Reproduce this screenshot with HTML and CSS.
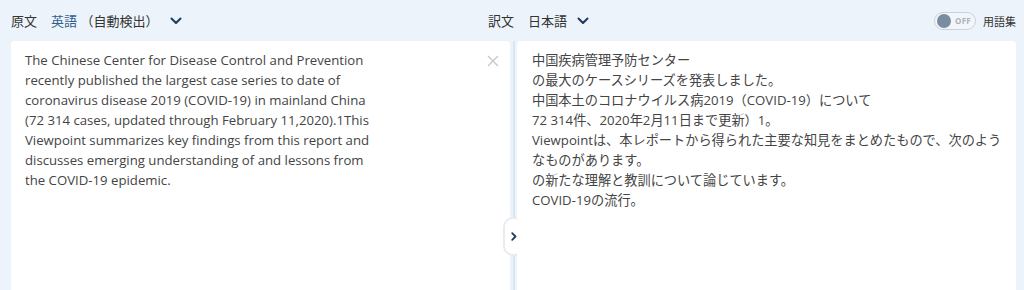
FILE: index.html
```html
<!DOCTYPE html>
<html>
<head>
    <title>翻訳</title>
    <link rel="stylesheet" href="styles.css">
</head>
<body>
    <div class="app">
        <div class="topbar">
            <div class="lang-side">
                <span class="label">原文</span>
                <span class="lang"><span class="lang-name">英語</span> （自動検出）</span>
                <svg class="chev" width="12" height="8" viewBox="0 0 12 8"><path d="M1.5 1.5 L6 6 L10.5 1.5" fill="none" stroke="#1f3a5a" stroke-width="2" stroke-linecap="round" stroke-linejoin="round"/></svg>
            </div>
            <div class="lang-side target">
                <span class="label">訳文</span>
                <span class="lang">日本語</span>
                <svg class="chev" width="12" height="8" viewBox="0 0 12 8"><path d="M1.5 1.5 L6 6 L10.5 1.5" fill="none" stroke="#1f3a5a" stroke-width="2" stroke-linecap="round" stroke-linejoin="round"/></svg>
                <div class="glossary">
                    <span class="toggle"><span class="knob"></span><span class="off">OFF</span></span>
                    <span class="gloss-label">用語集</span>
                </div>
            </div>
        </div>

        <div class="panes">
            <div class="pane source">
                <p class="text">The Chinese Center for Disease Control and Prevention<br>recently published the largest case series to date of<br>coronavirus disease 2019 (COVID-19) in mainland China<br>(72 314 cases, updated through February 11,2020).1This<br>Viewpoint summarizes key findings from this report and<br>discusses emerging understanding of and lessons from<br>the COVID-19 epidemic.</p>
                <svg class="clear" width="12" height="12" viewBox="0 0 12 12"><path d="M1 1 L11 11 M11 1 L1 11" stroke="#c4c8cc" stroke-width="1.4"/></svg>
            </div>
            <div class="divider">
                <span class="swap"><svg width="6" height="9" viewBox="0 0 6 9"><path d="M1.2 1.2 L4.5 4.5 L1.2 7.8" fill="none" stroke="#1f3a5a" stroke-width="1.8" stroke-linecap="round" stroke-linejoin="round"/></svg></span>
            </div>
            <div class="pane result">
                <p class="text">中国疾病管理予防センター<br>の最大のケースシリーズを発表しました。<br>中国本土のコロナウイルス病2019（COVID-19）について<br>72 314件、2020年2月11日まで更新）1。<br>Viewpointは、本レポートから得られた主要な知見をまとめたもので、次のよう<br>なものがあります。<br>の新たな理解と教訓について論じています。<br>COVID-19の流行。</p>
            </div>
        </div>
    </div>
</body>
</html>
```

FILE: styles.css
```css
body { margin: 0; background: #edf3fa; font-family: "Open Sans", "Noto Sans CJK JP", sans-serif; color: #333; }
.app { width: 1024px; height: 290px; overflow: hidden; display: flex; flex-direction: column; }

.topbar { height: 41px; display: flex; }
.lang-side { flex: 0 0 477px; display: flex; align-items: center; padding-left: 11px; font-size: 13px; color: #333; }
.lang-side.target { flex: 1; padding-left: 0; padding-right: 8px; }
.label { margin-right: 14px; }
.lang { color: #333; }
.lang-name { color: #2f5f8e; }
.chev { margin-left: 12px; }
.target .chev { margin-left: 10px; }

.glossary { margin-left: auto; display: flex; align-items: center; gap: 7px; font-size: 11px; }
.toggle { width: 36px; height: 16px; border: 1.5px solid #c9d3dd; border-radius: 10px; background: #f3f6f9; display: flex; align-items: center; padding: 0 2px; box-sizing: content-box; }
.knob { width: 14px; height: 14px; border-radius: 50%; background: #7a8ca1; }
.off { font-size: 8px; font-weight: bold; color: #a8b2bd; margin-left: 4px; letter-spacing: 0.3px; }
.gloss-label { color: #333; }

.panes { flex: 1; display: flex; padding: 0 8px 0 11px; }
.pane { background: #fff; border-radius: 4px 4px 0 0; position: relative; }
.source { flex: 0 0 499px; }
.result { flex: 1; }
.text { margin: 0; font-size: 13.2px; line-height: 20px; color: #444; }
.source .text { padding: 9px 14px; }
.result .text { padding: 9px 6px 9px 15px; }
.clear { position: absolute; top: 14px; right: 11px; }

.divider { flex: 0 0 7px; position: relative; display: flex; justify-content: center; }
.divider::before { content: ""; width: 2px; background: #d9e6f1; }
.swap { position: absolute; left: -7px; top: 176px; width: 17px; height: 35px; border: 2px solid #e8ecf0; border-radius: 10px; background: #fff; display: flex; align-items: center; justify-content: center; }
```
